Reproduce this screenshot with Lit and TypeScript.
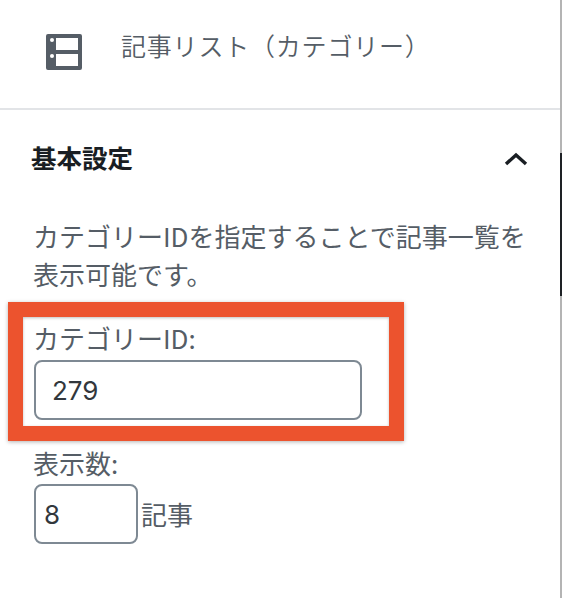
import { LitElement, html, css } from "lit";
import { customElement } from "lit/decorators.js";

@customElement("app-root")
export class AppRoot extends LitElement {
  static styles = css`
    :host {
      display: block;
      position: relative;
      width: 562px;
      height: 598px;
      overflow: hidden;
      background: #fff;
      font-family: "Noto Sans CJK JP", "Inter", sans-serif;
      color: #555d66;
    }
    .panel {
      width: 562px;
      height: 598px;
      box-sizing: border-box;
      border-right: 2px solid #b4b4b4;
      display: flex;
      flex-direction: column;
    }
    .head {
      box-sizing: border-box;
      border-bottom: 2px solid #e2e4e7;
      display: flex;
      align-items: flex-start;
      padding: 34px 0 0 46px;
      gap: 39px;
      flex: none;
      height: 110px;
    }
    .head svg { display: block; flex: none; }
    .title {
      font-size: 25px;
      line-height: 26px;
      font-weight: 350;
      letter-spacing: 0.8px;
      margin-top: -2px;
    }
    .body { padding: 0 0 0 33px; display: flex; flex-direction: column; }
    .sect {
      display: flex;
      align-items: center;
      justify-content: space-between;
      height: 96px;
      margin-left: -2px;
      padding-right: 32px;
      flex: none;
      margin-top: -1px;
    }
    .sect svg { margin-top: 4px; }
    .sect h2 {
      margin: 0;
      font-size: 25.5px;
      line-height: 30px;
      font-weight: 700;
      color: #191e23;
    }
    .desc {
      margin: 12px 0 0;
      font-size: 26px;
      line-height: 38px;
      width: 510px;
    }
    .label {
      font-size: 26px;
      line-height: 32px;
      display: block;
    }
    .input {
      box-sizing: border-box;
      height: 60px;
      border: 2px solid #7e8993;
      border-radius: 8px;
      font: 400 26px/1 "Inter", "Liberation Sans", sans-serif;
      color: #32373c;
      background: #fff;
      display: block;
      outline: none;
      margin: 0 0 0 1px;
    }
    .id { width: 328px; padding: 0 16px; }
    .num { width: 104px; padding: 0 8px; }
    .f1 { margin-top: 29px; }
    .f2 { margin-top: 27px; }
    .row { display: flex; align-items: center; gap: 3px; margin-top: 5px; }
    .row span { font-size: 26px; line-height: 30px; }
    .gap { margin-top: 6px; }
    .mark {
      position: absolute;
      left: 8px;
      top: 302px;
      width: 396px;
      height: 139px;
      box-sizing: border-box;
      border: 15px solid #ec532e;
      box-shadow: 0 1px 4px rgba(0,0,0,.3), inset 0 1px 3px rgba(0,0,0,.25);
      pointer-events: none;
    }
    .edge {
      position: absolute;
      left: 560px;
      top: 153px;
      width: 2px;
      height: 143px;
      background: #1e2125;
    }
  `;

  render() {
    return html`
      <div class="panel">
        <div class="head">
          <svg width="36" height="36" viewBox="0 0 36 36" aria-hidden="true">
            <path fill="#555d66" fill-rule="evenodd" d="M2 0h32a2 2 0 0 1 2 2v32a2 2 0 0 1-2 2H2a2 2 0 0 1-2-2V2a2 2 0 0 1 2-2zM10 4v12h22V4zM10 20v12h22V20z"/>
            <circle cx="6" cy="6" r="2" fill="#fff"/>
            <circle cx="6" cy="22" r="2" fill="#fff"/>
          </svg>
          <div class="title">記事リスト（カテゴリー）</div>
        </div>
        <div class="body">
          <div class="sect">
            <h2>基本設定</h2>
            <svg width="24" height="14" viewBox="0 0 24 14" aria-hidden="true">
              <path d="M2 12 12 3l10 9" fill="none" stroke="#191e23" stroke-width="3.4"/>
            </svg>
          </div>
          <p class="desc">カテゴリーIDを指定することで記事一覧を表示可能です。</p>
          <label class="label f1">カテゴリーID:</label>
          <input class="input id gap" .value=${"279"} />
          <label class="label f2">表示数:</label>
          <div class="row">
            <input class="input num" .value=${"8"} />
            <span>記事</span>
          </div>
        </div>
      </div>
      <div class="mark"></div>
      <div class="edge"></div>
    `;
  }
}
